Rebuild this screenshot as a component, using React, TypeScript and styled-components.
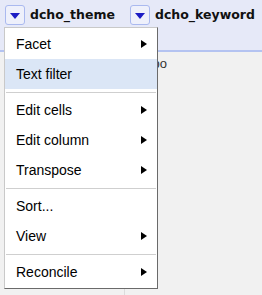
import React from "react";
import styled, { createGlobalStyle } from "styled-components";

const Global = createGlobalStyle`
  html, body { margin: 0; padding: 0; }
  body { background: #f1f1f1; font-family: "Liberation Sans", Arial, sans-serif; }
`;

const Page = styled.div`
  position: relative;
  width: 262px;
  height: 295px;
  overflow: hidden;
  background: #f1f1f1;
`;

const HeaderRow = styled.div`
  display: flex;
  height: 50px;
  background: #e6e9f8;
  border-bottom: 2px solid #b4c3f1;
`;

const HeaderCell = styled.div<{ $w?: number }>`
  display: flex;
  align-items: flex-start;
  padding: 5px 0 0 5px;
  box-sizing: border-box;
  width: ${(p) => (p.$w ? `${p.$w}px` : "auto")};
  flex: ${(p) => (p.$w ? "none" : "1")};
`;

const DropButton = styled.div`
  width: 20px;
  height: 20px;
  box-sizing: border-box;
  border: 1px solid #aab9ef;
  border-radius: 3px;
  background: #eef0fb;
  display: flex;
  align-items: center;
  justify-content: center;
  margin-right: 5px;
  flex: none;
`;

const DownTriangle = styled.span`
  width: 0;
  height: 0;
  border-left: 5px solid transparent;
  border-right: 5px solid transparent;
  border-top: 6px solid #1c1cc4;
  margin-top: 1px;
`;

const ColumnName = styled.span`
  font-family: "DejaVu Sans", Verdana, sans-serif;
  font-weight: bold;
  font-size: 12.5px;
  line-height: 20px;
  color: #111;
  white-space: nowrap;
`;

const BodyRow = styled.div`
  display: flex;
  height: 243px;
`;

const BodyCell = styled.div<{ $w?: number; $divider?: boolean }>`
  box-sizing: border-box;
  width: ${(p) => (p.$w ? `${p.$w}px` : "auto")};
  flex: ${(p) => (p.$w ? "none" : "1")};
  border-right: ${(p) => (p.$divider ? "1px solid #dcdcdc" : "none")};
  padding: 4px 0 0 11px;
  font-size: 13px;
  line-height: 16px;
  color: #333;
`;

const Menu = styled.div`
  position: absolute;
  left: 4px;
  top: 27px;
  width: 154px;
  box-sizing: border-box;
  background: #fff;
  border-top: 1px solid #c9c9c9;
  border-left: 1px solid #c9c9c9;
  border-right: 1px solid #6a6a6a;
  border-bottom: 1px solid #6a6a6a;
  padding: 1px 0 1px;
  display: flex;
  flex-direction: column;
`;

const MenuItem = styled.div<{ $active?: boolean }>`
  height: 30px;
  display: flex;
  align-items: center;
  justify-content: space-between;
  padding: 0 10px 0 11px;
  background: ${(p) => (p.$active ? "#dbe6f6" : "transparent")};
  font-family: "Liberation Sans", Arial, sans-serif;
  font-size: 14px;
  color: #000;
`;

const SubArrow = styled.span`
  width: 0;
  height: 0;
  border-top: 4px solid transparent;
  border-bottom: 4px solid transparent;
  border-left: 6px solid #000;
`;

const Separator = styled.div`
  height: 1px;
  margin: 3px 1px 2px;
  background: #cfcfcf;
`;

type Entry = { label: string; sub?: boolean; active?: boolean } | "sep";

const entries: Entry[] = [
  { label: "Facet", sub: true },
  { label: "Text filter", active: true },
  "sep",
  { label: "Edit cells", sub: true },
  { label: "Edit column", sub: true },
  { label: "Transpose", sub: true },
  "sep",
  { label: "Sort..." },
  { label: "View", sub: true },
  "sep",
  { label: "Reconcile", sub: true },
];

export default function App() {
  return (
    <Page>
      <Global />
      <HeaderRow>
        <HeaderCell $w={125}>
          <DropButton>
            <DownTriangle />
          </DropButton>
          <ColumnName>dcho_theme</ColumnName>
        </HeaderCell>
        <HeaderCell>
          <DropButton>
            <DownTriangle />
          </DropButton>
          <ColumnName>dcho_keyword</ColumnName>
        </HeaderCell>
      </HeaderRow>
      <BodyRow>
        <BodyCell $w={125} $divider />
        <BodyCell>Repo</BodyCell>
      </BodyRow>
      <Menu>
        {entries.map((e, i) =>
          e === "sep" ? (
            <Separator key={i} />
          ) : (
            <MenuItem key={i} $active={e.active}>
              <span>{e.label}</span>
              {e.sub && <SubArrow />}
            </MenuItem>
          )
        )}
      </Menu>
    </Page>
  );
}
